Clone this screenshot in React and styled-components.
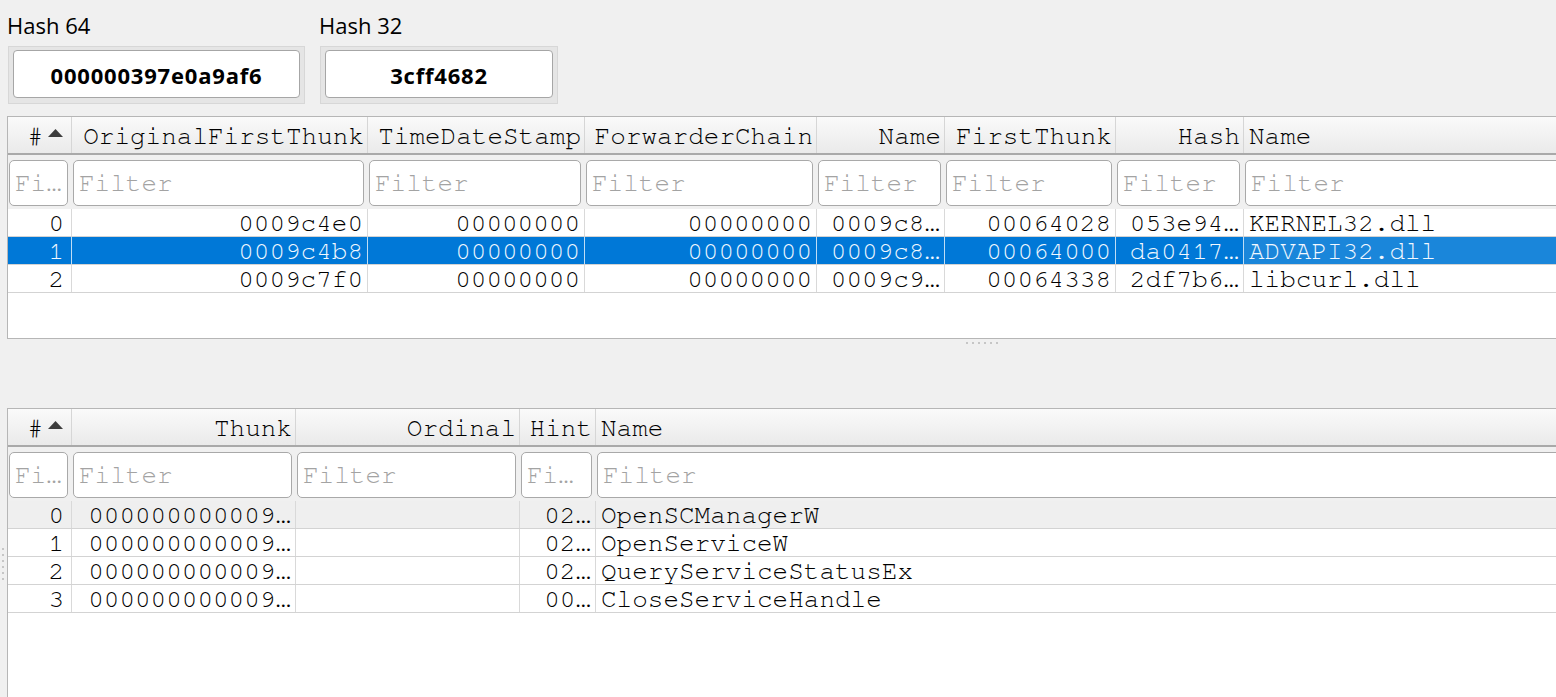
import React from 'react';
import styled, { createGlobalStyle } from 'styled-components';

const Global = createGlobalStyle`
  html, body { margin: 0; padding: 0; background: #f0f0f0; overflow: hidden; }
  * { box-sizing: border-box; }
`;

const MONO = `"Nimbus Mono PS", "Nimbus Mono L", "FreeMono", "Courier 10 Pitch", "Liberation Mono", monospace`;

const Page = styled.div`
  width: 1556px;
  height: 697px;
  overflow: hidden;
  background: #f0f0f0;
  font-family: "Open Sans", sans-serif;
`;

const Content = styled.div`
  padding-left: 7px;
`;

const HashRow = styled.div`
  display: flex;
  gap: 14px;
`;

const HashGroup = styled.div`
  display: flex;
  flex-direction: column;
`;

const HashLabel = styled.div`
  font-size: 22px;
  line-height: 28px;
  margin-top: 11px;
  color: #000;
`;

const HashFrame = styled.div`
  margin: 7px 0 0 1px;
  width: ${p => p.$w}px;
  height: 58px;
  border: 1px solid #d7d7d7;
  background: #e5e5e5;
  padding: 3px 4px 5px 4px;
`;

const HashValue = styled.div`
  height: 48px;
  border: 1px solid #a6a6a6;
  border-radius: 4px;
  background: #fff;
  display: flex;
  align-items: center;
  justify-content: center;
  font-weight: 700;
  font-size: 22px;
  letter-spacing: 0.8px;
  padding-top: 2px;
  color: #000;
`;

const Table = styled.div`
  width: 1950px;
  height: ${p => p.$h}px;
  border: 1px solid #b6b6b6;
  background: #fff;
  overflow: hidden;
  font-family: ${MONO};
  font-size: 26px;
`;

const TopTable = styled(Table)`
  margin-top: 12px;
`;

const HeaderRow = styled.div`
  display: grid;
  grid-template-columns: ${p => p.$cols};
  height: 38px;
  background: linear-gradient(#fafafa, #eaeaea);
  border-bottom: 2px solid #a9a9a9;
`;

const HeaderCell = styled.div`
  display: flex;
  align-items: center;
  justify-content: ${p => (p.$left ? 'flex-start' : 'flex-end')};
  gap: 5px;
  padding: 2px ${p => p.$pr ?? 3}px 0 ${p => (p.$left ? 5 : 3)}px;
  border-right: ${p => (p.$last ? 'none' : '1px solid #d6d6d6')};
  white-space: nowrap;
  overflow: hidden;
  color: #000;
`;

const SortArrow = styled.svg`
  width: 15px;
  height: 8px;
  flex: none;
  margin-bottom: 6px;
`;

const FilterRow = styled.div`
  display: grid;
  grid-template-columns: ${p => p.$cols};
  height: 54px;
  padding-top: 5px;
  background: #f0f0f0;
`;

const FilterCell = styled.div`
  padding: 0 4px 0 1px;
  min-width: 0;
`;

const FilterInput = styled.input`
  display: block;
  width: 100%;
  height: 46px;
  margin: 0;
  border: 1px solid #a9a9a9;
  border-radius: 5px;
  background: #fff;
  padding: 0 5px;
  font-family: ${MONO};
  font-size: 26px;
  color: #000;
  outline: none;
  &::placeholder { color: #a3a3a3; opacity: 1; }
`;

const DataRow = styled.div`
  display: grid;
  grid-template-columns: ${p => p.$cols};
  height: 28px;
  border-bottom: 1px solid #d3d3d3;
  background: ${p => (p.$selected ? '#0078d7' : p.$current ? '#efefef' : '#fff')};
`;

const DataCell = styled.div`
  display: flex;
  align-items: center;
  justify-content: ${p => (p.$left ? 'flex-start' : 'flex-end')};
  padding: 0 ${p => p.$pr ?? 4}px 0 5px;
  border-right: ${p =>
    p.$last ? 'none' : p.$selected ? '1px solid rgba(255,255,255,0.75)' : '1px solid #d9d9d9'};
  background: ${p => (p.$selected && p.$last ? '#1a86da' : 'transparent')};
  color: ${p => (p.$selected ? '#f2f8ff' : '#000')};
  white-space: nowrap;
  overflow: hidden;
  line-height: 26px;
`;

const HSplitter = styled.div`
  width: 1950px;
  height: 69px;
  display: flex;
  justify-content: center;
  gap: 4px;
  padding-top: 3px;
`;

const Dot = styled.span`
  width: 2px;
  height: 2px;
  background: #c6c6c6;
`;

const BottomArea = styled.div`
  display: flex;
  height: 312px;
`;

const VSplitter = styled.div`
  width: 7px;
  flex: none;
  display: flex;
  flex-direction: column;
  justify-content: center;
  gap: 4px;
  padding-left: 2px;
`;

const BottomTable = styled(Table)`
  flex: none;
`;

const topCols = '64px 296px 217px 232px 128px 171px 128px 1fr';
const bottomCols = '64px 224px 224px 76px 1fr';

const topHeaders = ['OriginalFirstThunk', 'TimeDateStamp', 'ForwarderChain', 'Name', 'FirstThunk', 'Hash', 'Name'];
const topFilters = ['Fi…', 'Filter', 'Filter', 'Filter', 'Filter', 'Filter', 'Filter', 'Filter'];
const topRows = [
  ['0', '0009c4e0', '00000000', '00000000', '0009c8…', '00064028', '053e94…', 'KERNEL32.dll'],
  ['1', '0009c4b8', '00000000', '00000000', '0009c8…', '00064000', 'da0417…', 'ADVAPI32.dll'],
  ['2', '0009c7f0', '00000000', '00000000', '0009c9…', '00064338', '2df7b6…', 'libcurl.dll'],
];

const bottomHeaders = ['Thunk', 'Ordinal', 'Hint', 'Name'];
const bottomFilters = ['Fi…', 'Filter', 'Filter', 'Fi…', 'Filter'];
const bottomRows = [
  ['0', '000000000009…', '', '02…', 'OpenSCManagerW'],
  ['1', '000000000009…', '', '02…', 'OpenServiceW'],
  ['2', '000000000009…', '', '02…', 'QueryServiceStatusEx'],
  ['3', '000000000009…', '', '00…', 'CloseServiceHandle'],
];

function GridTable({ cols, headers, filters, rows, selected, current, Wrapper, height }) {
  const n = headers.length + 1;
  return (
    <Wrapper $h={height}>
      <HeaderRow $cols={cols}>
        <HeaderCell $pr={8}>
          #
          <SortArrow viewBox="0 0 15 8">
            <polygon points="0,8 7.5,0 15,8" fill="#3d3d3d" />
          </SortArrow>
        </HeaderCell>
        {headers.map((h, i) => (
          <HeaderCell key={i} $left={i === headers.length - 1} $last={i === headers.length - 1}>
            {h}
          </HeaderCell>
        ))}
      </HeaderRow>
      <FilterRow $cols={cols}>
        {filters.map((f, i) => (
          <FilterCell key={i}>
            <FilterInput placeholder={f} readOnly />
          </FilterCell>
        ))}
      </FilterRow>
      {rows.map((r, ri) => (
        <DataRow key={ri} $cols={cols} $selected={ri === selected} $current={ri === current}>
          {r.map((c, ci) => (
            <DataCell
              key={ci}
              $left={ci === n - 1}
              $last={ci === n - 1}
              $pr={ci === 0 ? 7 : 4}
              $selected={ri === selected}
            >
              {c}
            </DataCell>
          ))}
        </DataRow>
      ))}
    </Wrapper>
  );
}

export default function App() {
  return (
    <Page>
      <Global />
      <Content>
        <HashRow>
          <HashGroup>
            <HashLabel>Hash 64</HashLabel>
            <HashFrame $w={297}>
              <HashValue>000000397e0a9af6</HashValue>
            </HashFrame>
          </HashGroup>
          <HashGroup>
            <HashLabel>Hash 32</HashLabel>
            <HashFrame $w={238}>
              <HashValue>3cff4682</HashValue>
            </HashFrame>
          </HashGroup>
        </HashRow>
        <GridTable
          Wrapper={TopTable}
          height={223}
          cols={topCols}
          headers={topHeaders}
          filters={topFilters}
          rows={topRows}
          selected={1}
        />
        <HSplitter>
          {[0, 1, 2, 3, 4, 5].map(i => <Dot key={i} />)}
        </HSplitter>
      </Content>
      <BottomArea>
        <VSplitter>
          {[0, 1, 2, 3, 4, 5].map(i => <Dot key={i} />)}
        </VSplitter>
        <GridTable
          Wrapper={BottomTable}
          height={312}
          cols={bottomCols}
          headers={bottomHeaders}
          filters={bottomFilters}
          rows={bottomRows}
          current={0}
        />
      </BottomArea>
    </Page>
  );
}
